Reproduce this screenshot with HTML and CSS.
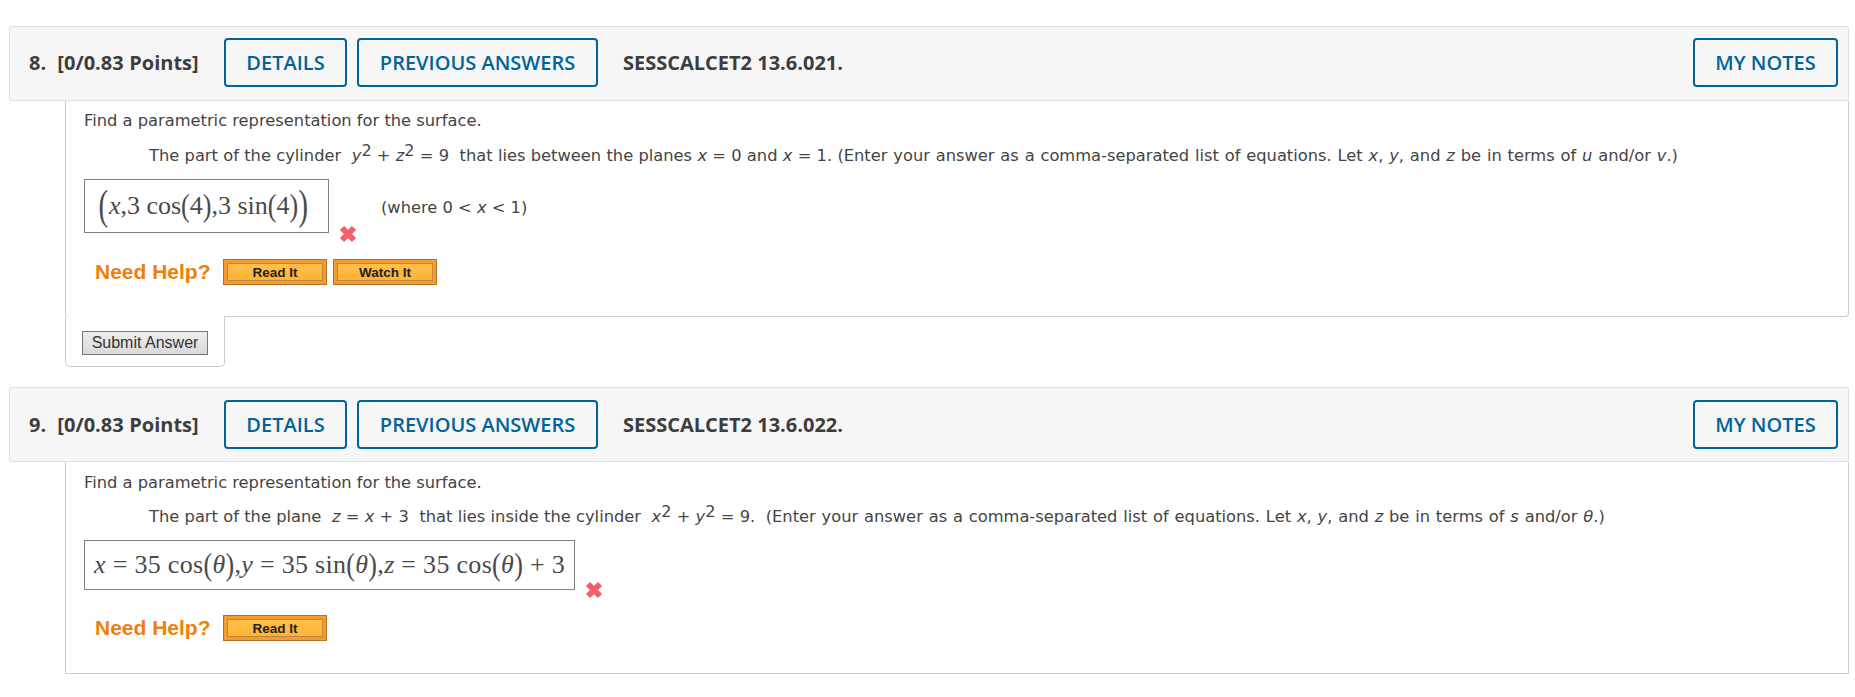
FILE: index.html
```html
<!DOCTYPE html>
<html lang="en">
<head>
<meta charset="utf-8">
<title>Questions</title>
<link rel="stylesheet" href="styles.css">
</head>
<body>
<section class="question q8">
  <header class="qhead">
    <span class="qnum">8.&nbsp; [0/0.83 Points]</span>
    <a class="btn details">DETAILS</a>
    <a class="btn prev">PREVIOUS ANSWERS</a>
    <span class="ref">SESSCALCET2 13.6.021.</span>
    <a class="btn notes">MY NOTES</a>
  </header>
  <div class="panel">
    <p class="intro">Find a parametric representation for the surface.</p>
    <p class="prompt">The part of the cylinder&nbsp; <i>y</i><sup>2</sup> + <i>z</i><sup>2</sup> = 9&nbsp; that lies between the planes <i>x</i> = 0 and <i>x</i> = 1. <span class="instr">(Enter your answer as a comma-separated list of equations. Let <i>x</i>, <i>y</i>, and <i>z</i> be in terms of <i>u</i> and/or <i>v</i>.)</span></p>
    <div class="answer">
      <div class="mathbox box8"><span class="big">(</span><i>x</i>,3 cos<span class="mid">(</span>4<span class="mid">)</span>,3 sin<span class="mid">(</span>4<span class="mid">)</span><span class="big">)</span></div>
      <svg class="wrong" viewBox="0 0 18 18" aria-label="incorrect"><path d="M3 3 15 15M15 3 3 15"/></svg>
      <span class="where">(where 0 &lt; <i>x</i> &lt; 1)</span>
    </div>
    <div class="help">
      <span class="need">Need Help?</span>
      <a class="resource">Read It</a>
      <a class="resource">Watch It</a>
    </div>
  </div>
  <div class="submit-tab"><button class="submit">Submit Answer</button></div>
</section>
<section class="question q9">
  <header class="qhead">
    <span class="qnum">9.&nbsp; [0/0.83 Points]</span>
    <a class="btn details">DETAILS</a>
    <a class="btn prev">PREVIOUS ANSWERS</a>
    <span class="ref">SESSCALCET2 13.6.022.</span>
    <a class="btn notes">MY NOTES</a>
  </header>
  <div class="panel last">
    <p class="intro">Find a parametric representation for the surface.</p>
    <p class="prompt">The part of the plane&nbsp; <i>z</i> = <i>x</i> + 3&nbsp; that lies inside the cylinder&nbsp; <i>x</i><sup>2</sup> + <i>y</i><sup>2</sup> = 9.&nbsp; <span class="instr">(Enter your answer as a comma-separated list of equations. Let <i>x</i>, <i>y</i>, and <i>z</i> be in terms of <i>s</i> and/or <i>θ</i>.)</span></p>
    <div class="answer">
      <div class="mathbox box9"><i>x</i> = 35 cos<span class="mid">(</span><i>θ</i><span class="mid">)</span>,<i>y</i> = 35 sin<span class="mid">(</span><i>θ</i><span class="mid">)</span>,<i>z</i> = 35 cos<span class="mid">(</span><i>θ</i><span class="mid">)</span> + 3</div>
      <svg class="wrong" viewBox="0 0 18 18" aria-label="incorrect"><path d="M3 3 15 15M15 3 3 15"/></svg>
    </div>
    <div class="help">
      <span class="need">Need Help?</span>
      <a class="resource">Read It</a>
    </div>
  </div>
</section>
</body>
</html>
```
FILE: styles.css
```css
* { box-sizing: border-box; }
html, body { margin: 0; padding: 0; background: #fff; }
body { padding: 26px 6px 0 9px; height: 697px; overflow: hidden; font-family: "DejaVu Sans", sans-serif; color: #444; }

.question + .question { margin-top: 20px; }

.qhead {
  display: flex; align-items: center; height: 75px; padding: 0 10px 0 19px;
  background: #f6f6f6; border: 1px solid #e0e0e0; border-radius: 2px;
  font-family: "Open Sans", sans-serif; font-size: 20px;
}
.q8 .qhead { padding-bottom: 2px; }
.qnum { font-weight: 700; color: #3d3d3d; width: 195px; white-space: nowrap; word-spacing: .4px; }
.btn {
  display: flex; align-items: center; justify-content: center; height: 49px;
  border: 2px solid #00639c; border-radius: 4px; color: #00639c; font-weight: 600; white-space: nowrap;
}
.details { width: 123px; }
.prev { width: 241px; margin-left: 10px; }
.ref { margin-left: 25px; font-weight: 700; color: #3d3d3d; white-space: nowrap; }
.notes { width: 145px; margin-left: auto; }

.panel {
  margin-left: 56px; height: 216px; padding: 9px 0 0 18px;
  border: 1px solid #ccc; border-top: 0; border-radius: 0 0 4px 4px;
  font-size: 16.3px; line-height: 22px;
}
.panel.last { height: 212px; padding-top: 10px; border-radius: 0; }
.intro { margin: 0; }
.prompt { margin: 13px 0 0 65px; white-space: nowrap; word-spacing: .1px; }
.last .prompt { margin-top: 12px; }
.instr { word-spacing: .65px; }
sup { font-size: 16px; line-height: 0; vertical-align: 5px; }

.answer { display: flex; align-items: flex-start; margin-top: 12px; }
.mathbox {
  display: flex; align-items: center; justify-content: center; height: 54px;
  border: 1px solid #808080; font: 26px "Liberation Serif", serif; color: #4a4a4a; white-space: pre;
}
.box8 { width: 245px; padding-right: 6px; }
.box9 { width: 491px; height: 50px; letter-spacing: .3px; }
.big { font-size: 26px; line-height: 1; transform: scale(1.1, 1.65); margin: 0 1px; }
.mid { font-size: 26px; line-height: 1; transform: scaleY(1.25); }
.wrong { width: 18px; height: 18px; margin: 46px 0 0 10px; flex: none; }
.q9 .wrong { margin-top: 41px; }
.wrong path { fill: none; stroke: #f2606c; stroke-width: 6; }
.where { margin: 18px 0 0 24px; }

.help { display: flex; align-items: center; margin: 16px 0 0 11px; }
.q9 .help { margin-top: 16px; }
.need { font: 700 21px "Liberation Sans", sans-serif; color: #f07f09; width: 128px; white-space: nowrap; }
.resource {
  display: flex; align-items: center; justify-content: center; width: 104px; height: 26px; margin-right: 6px;
  border: 1px solid #b36f24; background: linear-gradient(#ffc24d, #ffb031);
  box-shadow: inset 0 0 0 3px #f79a2e, inset 0 0 0 4px #b98a3c;
  font: 700 13.5px "Liberation Sans", sans-serif; color: #222;
}

.submit-tab {
  width: 160px; height: 51px; margin: -1px 0 0 56px; padding: 15px 0 0 16px;
  background: #fff; border: 1px solid #ccc; border-top: 0; border-radius: 0 0 5px 5px;
  position: relative;
}
.submit {
  display: block; width: 126px; height: 24px; padding: 0;
  border: 1px solid #777; background: linear-gradient(#eee, #d9d9d9);
  font: 16px "Liberation Sans", sans-serif; color: #333;
}
```
